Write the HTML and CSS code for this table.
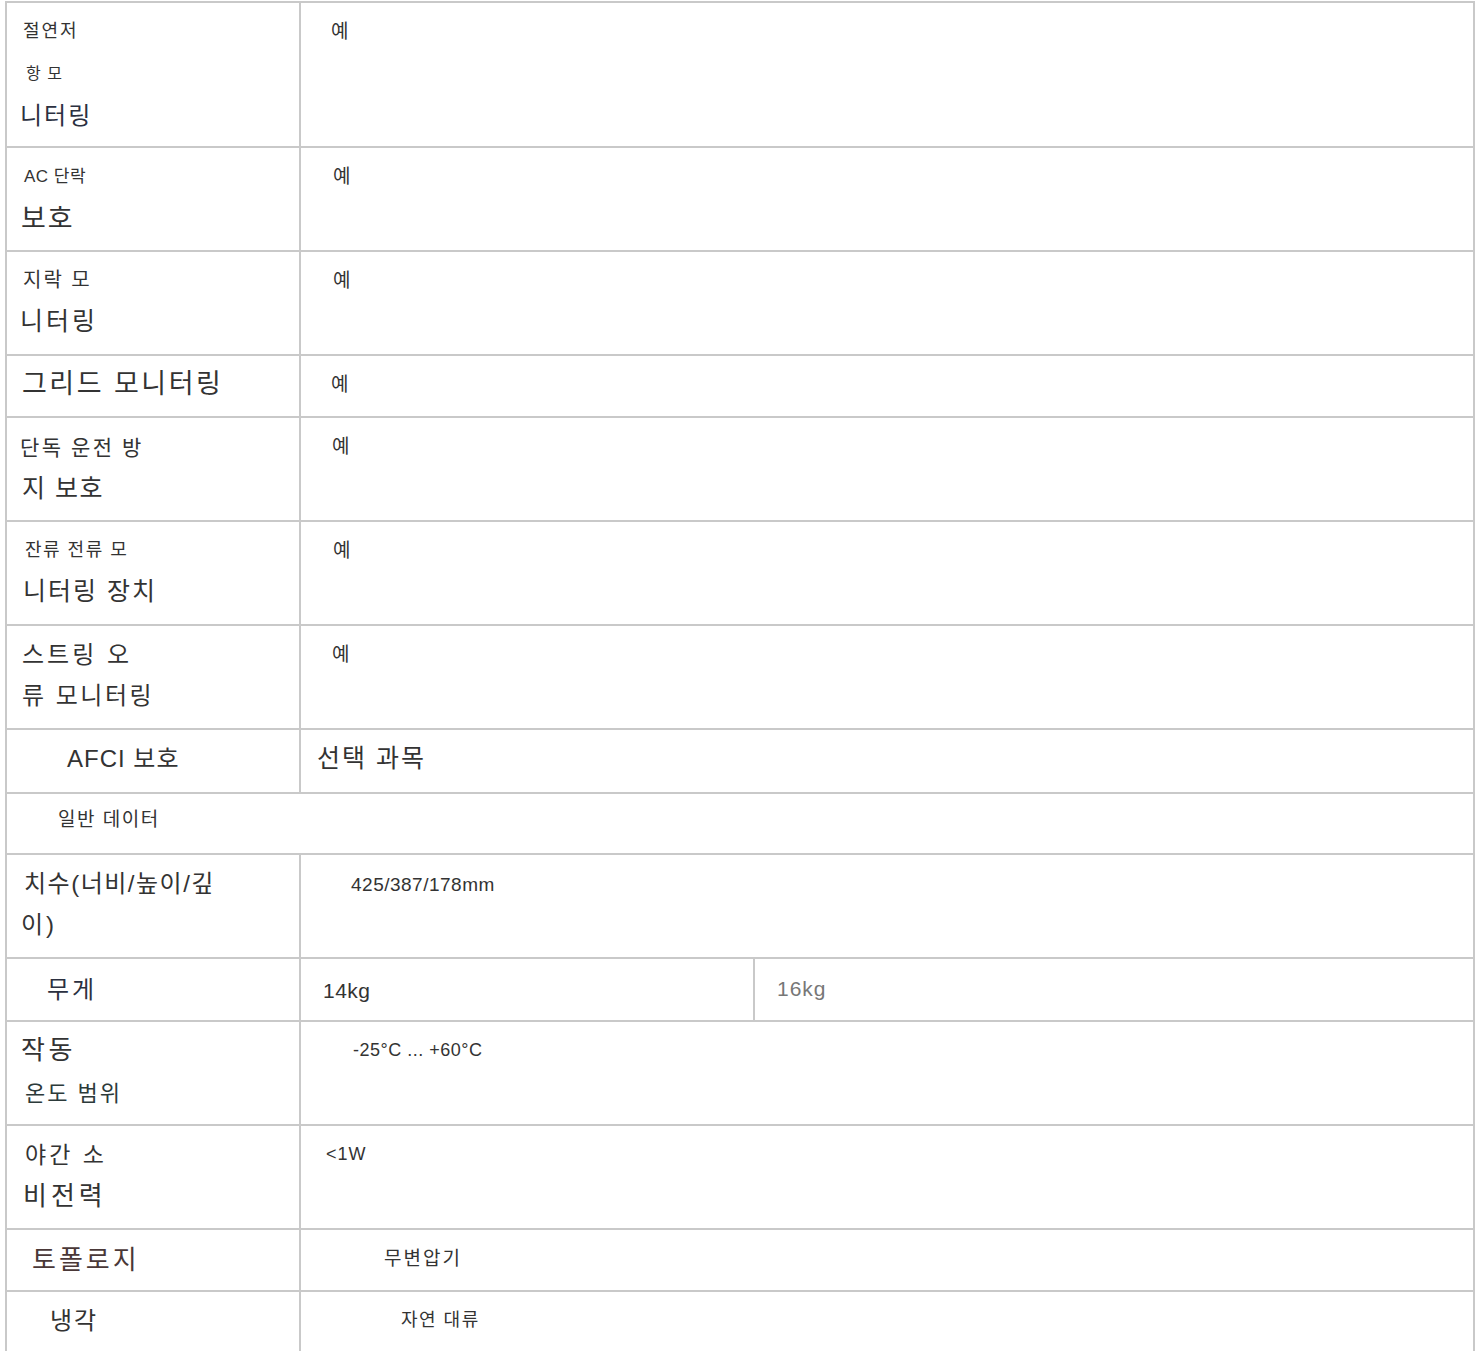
FILE: index.html
```html
<!DOCTYPE html>
<html lang="ko">
<head>
<meta charset="utf-8">
<title>사양</title>
<link rel="stylesheet" href="styles.css">
</head>
<body>
<div class="spec">
  <div class="row h145">
    <div class="label">
      <div class="ln f18 l2 p16">절연저</div>
      <div class="ln f16 l1 p19 g1">항 모</div>
      <div class="ln f24 l2 p13 g1 navy">니터링</div>
    </div>
    <div class="val"><div class="ln f19 p30">예</div></div>
  </div>
  <div class="row h104">
    <div class="label">
      <div class="ln f17 l05 p17">AC 단락</div>
      <div class="ln f27 l2 p14 g2">보호</div>
    </div>
    <div class="val"><div class="ln f19 p32">예</div></div>
  </div>
  <div class="row h104">
    <div class="label">
      <div class="ln f20 l2 p16">지락 모</div>
      <div class="ln f25 l3 p13">니터링</div>
    </div>
    <div class="val"><div class="ln f19 p32">예</div></div>
  </div>
  <div class="row h62">
    <div class="label">
      <div class="ln f27 l25 p15">그리드 모니터링</div>
    </div>
    <div class="val"><div class="ln f19 p30">예</div></div>
  </div>
  <div class="row h104">
    <div class="label">
      <div class="ln f21 l25 ws p13 dn1">단독 운전 방</div>
      <div class="ln f25 l15 p15">지 보호</div>
    </div>
    <div class="val"><div class="ln f19 p31">예</div></div>
  </div>
  <div class="row h104">
    <div class="label">
      <div class="ln f18 l15 p18">잔류 전류 모</div>
      <div class="ln f25 l2 p16">니터링 장치</div>
    </div>
    <div class="val"><div class="ln f19 p32">예</div></div>
  </div>
  <div class="row h104">
    <div class="label">
      <div class="ln f24 l3 p15">스트링 오</div>
      <div class="ln f24 l25 p15">류 모니터링</div>
    </div>
    <div class="val"><div class="ln f19 p31">예</div></div>
  </div>
  <div class="row h64">
    <div class="label">
      <div class="ln f24 l1 p60">AFCI 보호</div>
    </div>
    <div class="val"><div class="ln f25 l2 p16">선택 과목</div></div>
  </div>
  <div class="row h61 full">
    <div class="label wide">
      <div class="ln f19 l15 p51 up3">일반 데이터</div>
    </div>
  </div>
  <div class="row h104">
    <div class="label">
      <div class="ln f24 l15 p17">치수(너비/높이/깊</div>
      <div class="ln f24 l3 p14">이)</div>
    </div>
    <div class="val"><div class="ln f19 l05 p50 lat dn1">425/387/178mm</div></div>
  </div>
  <div class="row h63 split">
    <div class="label">
      <div class="ln f24 l3 p40 dn2 navy">무게</div>
    </div>
    <div class="val half"><div class="ln f21 l05 p22 lat dn3">14kg</div></div>
    <div class="val"><div class="ln f21 l1 p22 lat muted dn1">16kg</div></div>
  </div>
  <div class="row h104">
    <div class="label">
      <div class="ln f26 l35 p14">작동</div>
      <div class="ln f22 l2 p18 g2 teal">온도 범위</div>
    </div>
    <div class="val"><div class="ln f18 l05 p52 lat">-25°C ... +60°C</div></div>
  </div>
  <div class="row h104">
    <div class="label">
      <div class="ln f23 l3 p18 dn1">야간 소</div>
      <div class="ln f26 l4 p16">비전력</div>
    </div>
    <div class="val"><div class="ln f18 l1 p25 lat">&lt;1W</div></div>
  </div>
  <div class="row h62">
    <div class="label">
      <div class="ln f26 l3 p25 dn2 brown">토폴로지</div>
    </div>
    <div class="val"><div class="ln f19 l2 p83">무변압기</div></div>
  </div>
  <div class="row h62">
    <div class="label">
      <div class="ln f24 l2 p43">냉각</div>
    </div>
    <div class="val"><div class="ln f18 l15 p100">자연 대류</div></div>
  </div>
</div>
</body>
</html>
```

FILE: styles.css
```css
html, body {
  margin: 0;
  padding: 0;
  background: #ffffff;
}

body {
  font-family: "Liberation Sans", "Noto Sans CJK KR", sans-serif;
  color: #333333;
}

.spec {
  margin: 1px 0 0 5px;
  width: 1470px;
  box-sizing: border-box;
  border: 2px solid #c9c9c9;
  border-bottom: none;
}

.row {
  display: grid;
  grid-template-columns: 292px 1fr;
  box-sizing: border-box;
  border-bottom: 2px solid #c9c9c9;
  overflow: hidden;
}

.row.full {
  grid-template-columns: 1fr;
}

.row.split {
  grid-template-columns: 292px 454px 1fr;
}

.h145 { height: 145px; }
.h104 { height: 104px; }
.h64 { height: 64px; }
.h63 { height: 63px; }
.h62 { height: 62px; }
.h61 { height: 61px; }

.label,
.val {
  padding-top: 8px;
  box-sizing: border-box;
}

.val {
  border-left: 2px solid #c9c9c9;
}

.ln {
  line-height: 41px;
  white-space: nowrap;
}

.lat {
  font-family: "Liberation Sans", Arial, sans-serif;
}

.f16 { font-size: 16px; }
.f17 { font-size: 17px; }
.f18 { font-size: 18px; }
.f19 { font-size: 19px; }
.f20 { font-size: 20px; }
.f21 { font-size: 21px; }
.f22 { font-size: 22px; }
.f23 { font-size: 23px; }
.f24 { font-size: 24px; }
.f25 { font-size: 25px; }
.f26 { font-size: 26px; }
.f27 { font-size: 27px; }

.l05 { letter-spacing: 0.5px; }
.l1 { letter-spacing: 1px; }
.l15 { letter-spacing: 1.5px; }
.l2 { letter-spacing: 2px; }
.l25 { letter-spacing: 2.5px; }
.l3 { letter-spacing: 3px; }
.l35 { letter-spacing: 3.5px; }
.l4 { letter-spacing: 4px; }

.ws { word-spacing: -1px; }

.p13 { padding-left: 13px; }
.p14 { padding-left: 14px; }
.p15 { padding-left: 15px; }
.p16 { padding-left: 16px; }
.p17 { padding-left: 17px; }
.p18 { padding-left: 18px; }
.p19 { padding-left: 19px; }
.p22 { padding-left: 22px; }
.p25 { padding-left: 25px; }
.p30 { padding-left: 30px; }
.p31 { padding-left: 31px; }
.p32 { padding-left: 32px; }
.p40 { padding-left: 40px; }
.p43 { padding-left: 43px; }
.p50 { padding-left: 50px; }
.p51 { padding-left: 51px; }
.p52 { padding-left: 52px; }
.p60 { padding-left: 60px; }
.p83 { padding-left: 83px; }
.p100 { padding-left: 100px; }

.g1 { margin-top: 1px; }
.g2 { margin-top: 2px; }
.up3 { margin-top: -3px; }
.dn1 { margin-top: 1px; }
.dn2 { margin-top: 2px; }
.dn3 { margin-top: 3px; }

.navy { color: #2b3040; }
.teal { color: #2c3a3a; }
.brown { color: #4a3838; }
.muted { color: #777777; }
```
